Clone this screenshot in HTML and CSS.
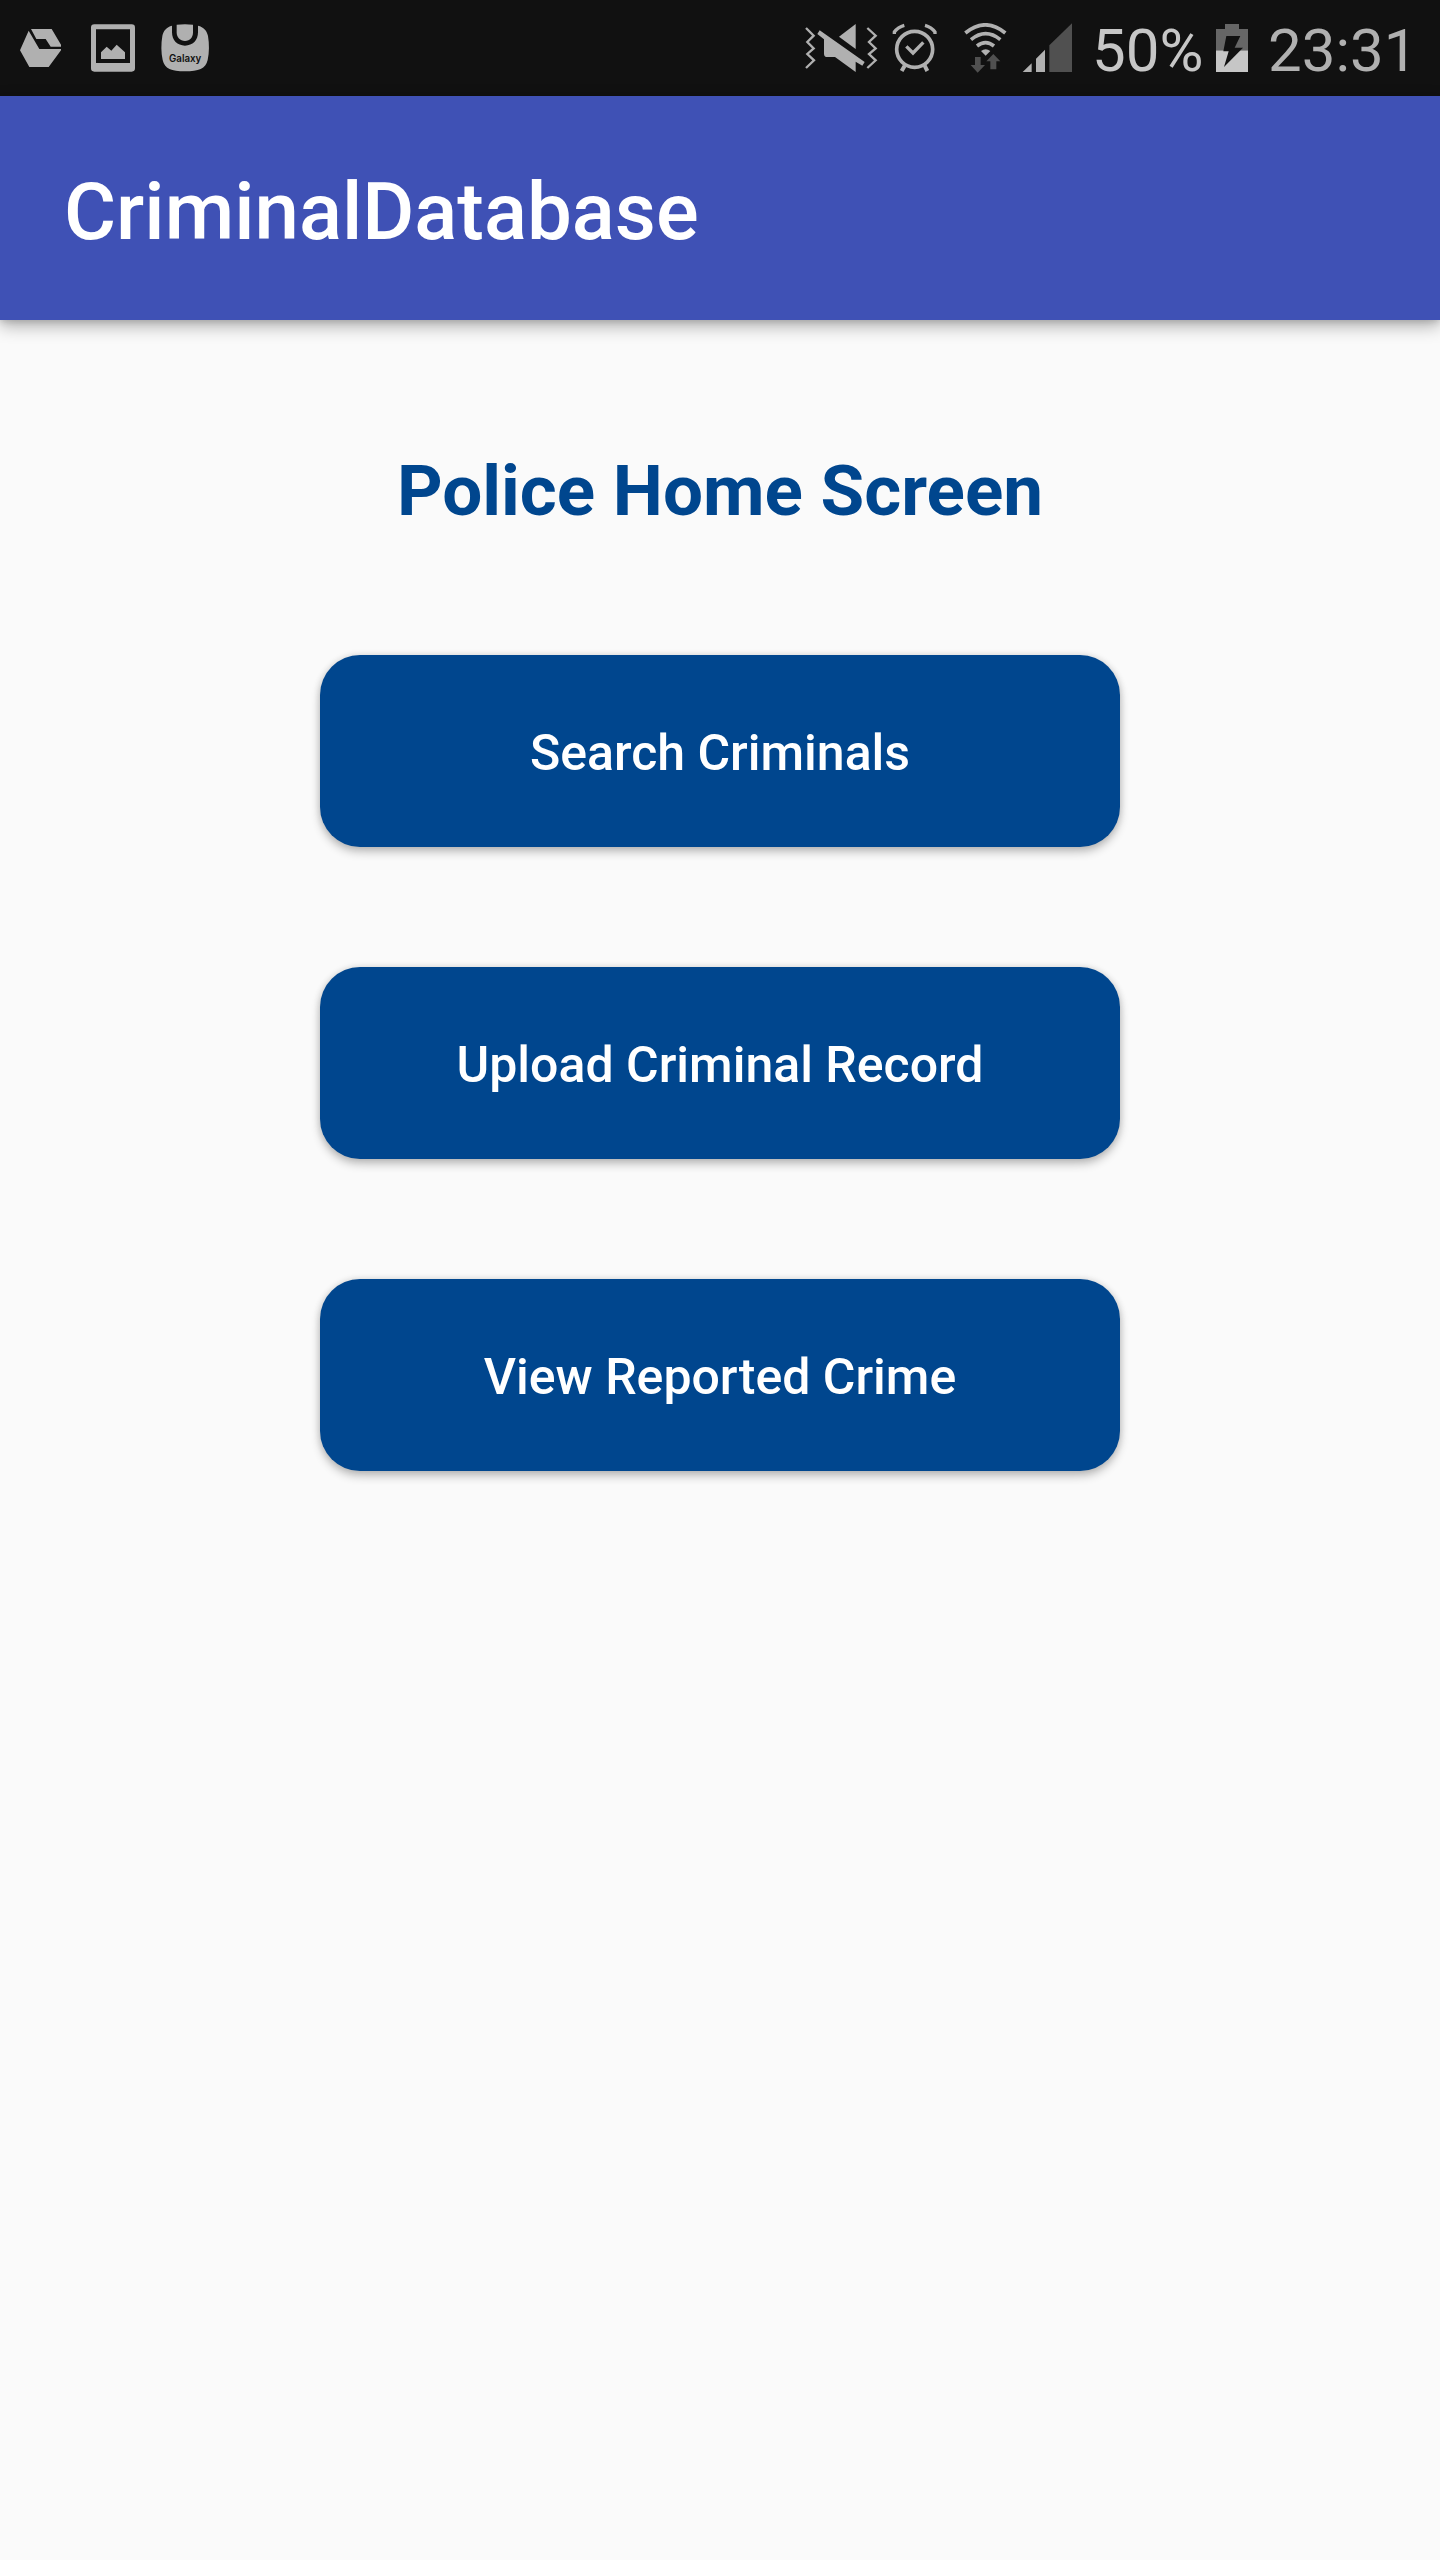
FILE: index.html
```html
<!DOCTYPE html>
<html lang="en">
<head>
<meta charset="utf-8">
<title>CriminalDatabase</title>
<link rel="stylesheet" href="styles.css">
</head>
<body>
<header class="status-bar">
  <div class="notifications">
    <svg class="icon icon-drive" viewBox="60 69 126 150" fill="#b0b0b0">
      <path d="M86 92L118 147H183V151L146 201H88L60 151Z"/>
      <path d="M93 87H155L183 134V140H152L137 117H109Z"/>
    </svg>
    <svg class="icon icon-picture" viewBox="270 69 138 150" fill="#b0b0b0">
      <path fill-rule="evenodd" d="M283 73H395Q405 73 405 83V205Q405 215 395 215H283Q273 215 273 205V83Q273 73 283 73ZM288 88V189H390V88Z"/>
      <path d="M303 177V157L320 140L334 152L350 134L375 157V177Z"/>
    </svg>
    <svg class="icon icon-galaxy" viewBox="480 69 150 150">
      <path fill="#b0b0b0" d="M516 77V97C516 121 532 137 555 137S594 121 594 97V77C611 81 621 92 624 108C628 132 628 158 623 180C617 206 596 214 555 214S494 206 488 180C483 158 483 132 487 108C490 92 500 81 516 77Z"/>
      <path fill="#b0b0b0" d="M530 74Q555 71 579 74V97C579 113 570 123 555 123S530 113 530 97Z"/>
      <text class="galaxy-label" x="507" y="185" textLength="97" lengthAdjust="spacingAndGlyphs">Galaxy</text>
    </svg>
  </div>
  <div class="system">
    <svg class="icon icon-mute" viewBox="42 69 222 150" fill="#b0b0b0">
      <path fill="none" stroke="#b0b0b0" stroke-width="7" d="M48 84L71 107L52 126L71 145L52 162L72 181L48 204"/>
      <path fill="none" stroke="#b0b0b0" stroke-width="7" d="M232 84L257 107L237 126L257 145L237 162L257 181L232 204"/>
      <path d="M197 72V147L147 110Z"/>
      <path d="M89 91L224 186L217 197L197 185V216L135 171H112Q102 171 102 161V118L82 102Z"/>
    </svg>
    <svg class="icon icon-alarm" viewBox="306 69 135 150" fill="none" stroke="#b0b0b0">
      <circle cx="374" cy="148" r="54" stroke-width="11"/>
      <path stroke-width="10" d="M349 139L369 159L400 127M313 102V96Q324 81 343 76M435 102V96Q424 81 405 76"/>
      <path stroke-width="12" d="M344 197L335 213M404 197L412 213"/>
    </svg>
    <svg class="icon icon-wifi" viewBox="519 69 135 150">
      <g fill="none" stroke="#b0b0b0" stroke-width="11">
        <path d="M526 99Q586 50 646 99"/>
        <path d="M543 119Q587 83 631 119"/>
        <path d="M561 138Q587 118 612 138"/>
      </g>
      <path fill="#b0b0b0" d="M573 153Q587 143 601 153L587 167Z"/>
      <path fill="#505050" d="M555 171H572V195H585L563 218L542 195H555ZM601 208V184H589L610 162L631 184H619V208Z"/>
    </svg>
    <svg class="icon icon-signal" viewBox="696 69 153 150">
      <path fill="#b0b0b0" d="M698 216L725 190V216ZM738 216V176L765 149V216Z"/>
      <path fill="#505050" d="M778 216V136L846 70V216Z"/>
    </svg>
    <span class="battery-level">50%</span>
    <svg class="icon icon-battery" viewBox="408 69 96 150">
      <path fill="#666" d="M435 72H477V87H504V151H408V87H435Z"/>
      <path fill="#c6c6c6" d="M408 151H504V216H408Z"/>
      <path fill="#111" d="M439 108H481L464 143H489L432 201L446 154H430Z"/>
    </svg>
    <time class="clock">23:31</time>
  </div>
</header>
<div class="app-bar"><h1 class="app-title">CriminalDatabase</h1></div>
<main class="content">
  <h2 class="heading">Police Home Screen</h2>
  <nav class="actions">
    <button class="action" type="button">Search Criminals</button>
    <button class="action" type="button">Upload Criminal Record</button>
    <button class="action" type="button">View Reported Crime</button>
  </nav>
</main>
</body>
</html>
```

FILE: styles.css
```css
* { box-sizing: border-box; }

body {
  margin: 0;
  min-height: 2560px;
  background: #fafafa;
  font-family: Roboto, sans-serif;
}

.status-bar {
  display: flex;
  justify-content: space-between;
  align-items: center;
  height: 96px;
  padding-left: 20px;
  background: #111;
}

.notifications,
.system {
  display: flex;
  align-items: center;
}

.icon { display: block; flex: none; height: 50px; }
.icon-drive { width: 42px; }
.icon-picture { width: 46px; margin-left: 28px; }
.icon-galaxy { width: 50px; margin-left: 24px; }
.icon-mute { width: 74px; }
.icon-alarm { width: 45px; margin-left: 14px; }
.icon-wifi { width: 45px; margin-left: 26px; }
.icon-signal { width: 51px; margin-left: 14px; }
.icon-battery { width: 32px; }

.galaxy-label {
  font: 600 31px Inter, sans-serif;
  fill: #111;
}

.battery-level,
.clock {
  font-size: 60px;
  line-height: 70px;
  padding-top: 5px;
  white-space: nowrap;
}

.battery-level { width: 124px; margin-left: 19px; color: #c6c6c6; }
.clock { width: 172px; margin-left: 20px; color: #b0b0b0; }

.app-bar {
  display: flex;
  align-items: center;
  height: 224px;
  padding: 7px 64px 0;
  background: #3f51b5;
  box-shadow: 0 6px 16px rgba(0, 0, 0, 0.3), 0 2px 6px rgba(0, 0, 0, 0.12);
}

.app-title {
  margin: 0;
  color: #fff;
  font-size: 79.8px;
  font-weight: 500;
  line-height: 94px;
}

.content {
  display: flex;
  flex-direction: column;
  align-items: center;
  padding-top: 129px;
}

.heading {
  margin: 0;
  color: #00468e;
  font-size: 71px;
  font-weight: 700;
  line-height: 84px;
}

.actions {
  display: flex;
  flex-direction: column;
  gap: 120px;
  margin-top: 122px;
}

.action {
  width: 800px;
  height: 192px;
  padding: 4px 0 0;
  border: 0;
  border-radius: 40px;
  background: #00468e;
  color: #fff;
  font: 500 50px/60px Roboto, sans-serif;
  box-shadow: 0 5px 10px rgba(0, 0, 0, 0.24), 0 0 7px rgba(0, 0, 0, 0.12);
}
```
